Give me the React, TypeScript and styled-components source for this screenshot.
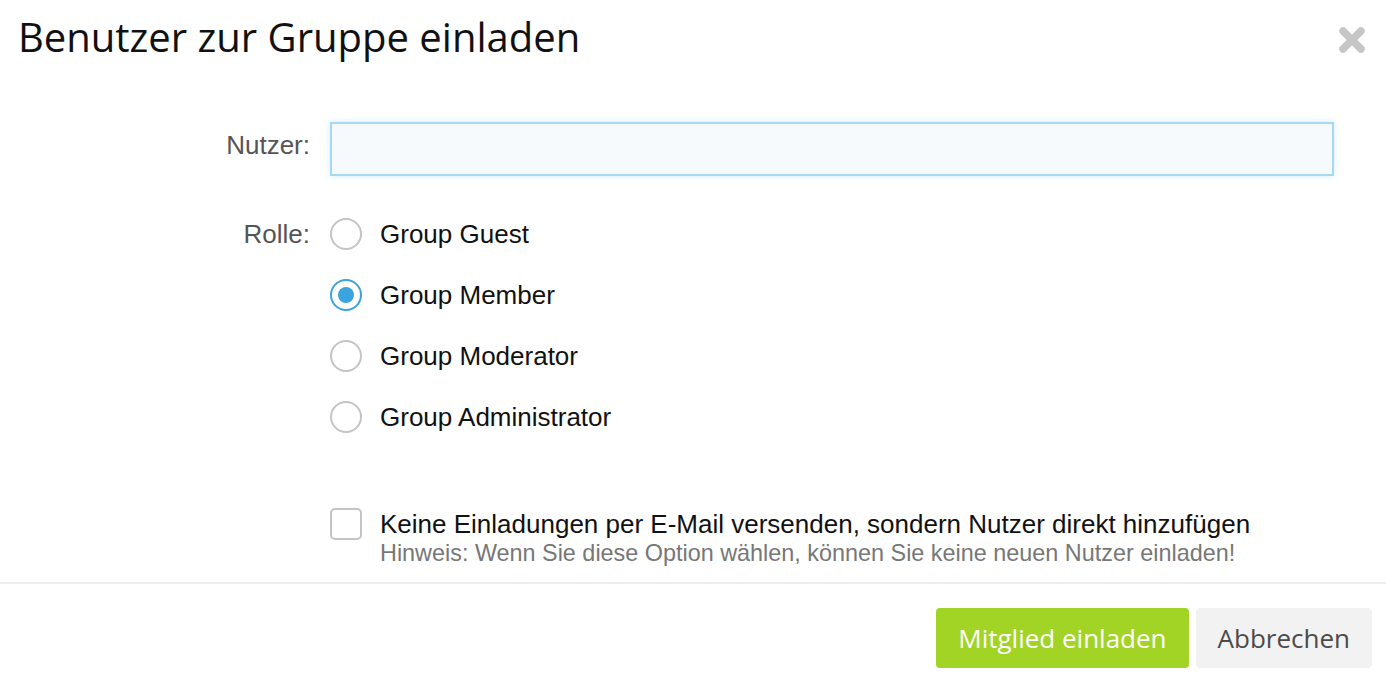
import React, { useState } from "react";
import styled, { createGlobalStyle } from "styled-components";

const GlobalStyle = createGlobalStyle`
  html, body { margin: 0; padding: 0; background: #ffffff; }
  body { font-family: "Liberation Sans", Arial, sans-serif; }
  * { box-sizing: border-box; }
`;

const Modal = styled.div`
  width: 1386px;
  height: 688px;
  display: flex;
  flex-direction: column;
  background: #fff;
`;

const Header = styled.div`
  display: flex;
  align-items: flex-start;
  justify-content: space-between;
  padding: 10px 21px 0 18px;
`;

const Title = styled.h1`
  margin: 0;
  font-family: "Open Sans", sans-serif;
  font-weight: 400;
  font-size: 40px;
  line-height: 53px;
  color: #111;
`;

const CloseButton = styled.button`
  border: 0;
  background: none;
  padding: 0;
  margin-top: 17px;
  width: 26px;
  height: 26px;
  cursor: pointer;
  display: flex;
`;

const Body = styled.div`
  flex: 1;
  display: flex;
  flex-direction: column;
  padding: 59px 52px 0 0;
`;

const FieldRow = styled.div<{ $gap?: number }>`
  display: grid;
  grid-template-columns: 310px 1fr;
  column-gap: 20px;
  margin-bottom: ${(p) => p.$gap ?? 0}px;
`;

const Label = styled.label<{ $lh: number }>`
  text-align: right;
  font-size: 26px;
  line-height: ${(p) => p.$lh}px;
  color: #555;
`;

const TextInput = styled.input`
  height: 54px;
  width: 100%;
  border: 2px solid #a7d9f2;
  background: #f6fafd;
  box-shadow: 0 0 6px rgba(120, 195, 235, 0.35);
  outline: none;
  font-size: 26px;
  padding: 0 12px;
  font-family: inherit;
`;

const RadioList = styled.div`
  display: flex;
  flex-direction: column;
  gap: 29px;
`;

const OptionRow = styled.label`
  display: flex;
  align-items: center;
  gap: 18px;
  font-size: 26px;
  line-height: 32px;
  color: #111;
  cursor: pointer;
`;

const RadioCircle = styled.span<{ $checked: boolean }>`
  width: 32px;
  height: 32px;
  flex: none;
  border-radius: 50%;
  border: 2px solid ${(p) => (p.$checked ? "#3ba3de" : "#c4c4c4")};
  display: flex;
  align-items: center;
  justify-content: center;
  &::after {
    content: "";
    width: 16px;
    height: 16px;
    border-radius: 50%;
    background: #3ba3de;
    display: ${(p) => (p.$checked ? "block" : "none")};
  }
`;

const CheckRow = styled.div`
  display: flex;
  align-items: flex-start;
  gap: 18px;
`;

const CheckBox = styled.span`
  width: 32px;
  height: 32px;
  flex: none;
  border: 2px solid #c4c4c4;
  border-radius: 5px;
  background: #fff;
`;

const CheckText = styled.div`
  display: flex;
  flex-direction: column;
`;

const CheckMain = styled.span`
  font-size: 26px;
  line-height: 32px;
  color: #111;
`;

const Hint = styled.span`
  font-size: 23.4px;
  line-height: 26px;
  color: #777;
`;

const Footer = styled.div`
  border-top: 2px solid #ececec;
  display: flex;
  justify-content: flex-end;
  gap: 7px;
  padding: 24px 14px 20px 0;
`;

const Button = styled.button<{ $primary?: boolean }>`
  height: 60px;
  border: 0;
  border-radius: 4px;
  font-family: "Open Sans", sans-serif;
  font-size: 26px;
  padding: 0 22px;
  cursor: pointer;
  background: ${(p) => (p.$primary ? "#a1d425" : "#f2f2f2")};
  color: ${(p) => (p.$primary ? "#ffffff" : "#4a4a4a")};
`;

const roles = ["Group Guest", "Group Member", "Group Moderator", "Group Administrator"];

export default function App() {
  const [role, setRole] = useState("Group Member");
  return (
    <Modal>
      <GlobalStyle />
      <Header>
        <Title>Benutzer zur Gruppe einladen</Title>
        <CloseButton aria-label="Schließen">
          <svg width="26" height="26" viewBox="0 0 26 26">
            <path d="M4 4 L22 22 M22 4 L4 22" stroke="#c6c6c6" strokeWidth="7.5" strokeLinecap="round" />
          </svg>
        </CloseButton>
      </Header>
      <Body>
        <FieldRow $gap={42}>
          <Label $lh={46}>Nutzer:</Label>
          <TextInput />
        </FieldRow>
        <FieldRow $gap={75}>
          <Label $lh={32}>Rolle:</Label>
          <RadioList>
            {roles.map((r) => (
              <OptionRow key={r} onClick={() => setRole(r)}>
                <RadioCircle $checked={role === r} />
                {r}
              </OptionRow>
            ))}
          </RadioList>
        </FieldRow>
        <FieldRow>
          <span />
          <CheckRow>
            <CheckBox />
            <CheckText>
              <CheckMain>Keine Einladungen per E-Mail versenden, sondern Nutzer direkt hinzufügen</CheckMain>
              <Hint>Hinweis: Wenn Sie diese Option wählen, können Sie keine neuen Nutzer einladen!</Hint>
            </CheckText>
          </CheckRow>
        </FieldRow>
      </Body>
      <Footer>
        <Button $primary>Mitglied einladen</Button>
        <Button>Abbrechen</Button>
      </Footer>
    </Modal>
  );
}
